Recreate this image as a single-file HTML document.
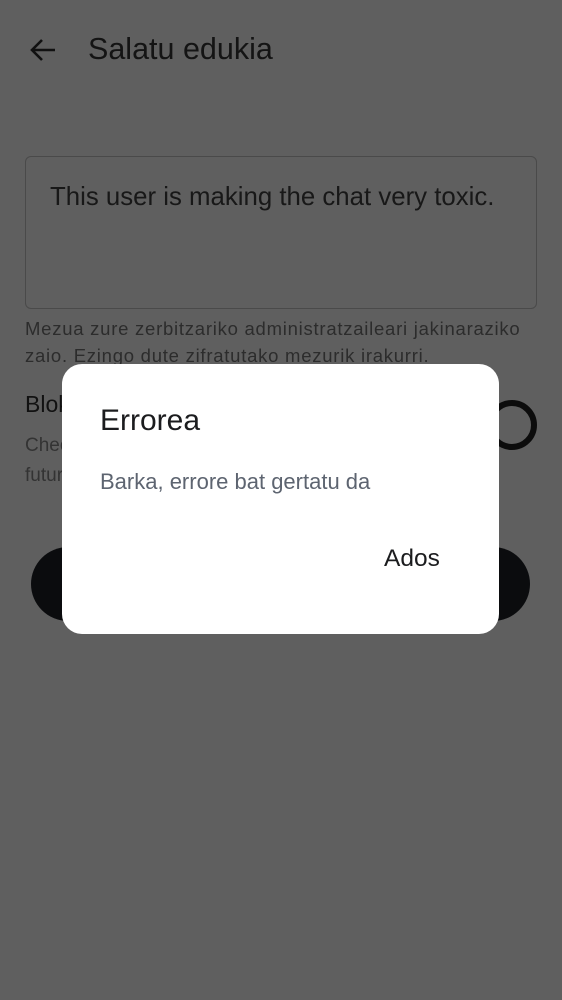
<!DOCTYPE html>
<html><head><meta charset="utf-8"><style>
html,body{margin:0;padding:0;width:562px;height:1000px;overflow:hidden;background:#5f5f5f;font-family:"Liberation Sans",sans-serif;}
.abs{position:absolute;white-space:nowrap}
</style></head><body>
<svg class="abs" style="left:28px;top:36px" width="30" height="28" viewBox="0 0 30 28"><path d="M27 14H4M14 4L4 14L14 24" stroke="#111" stroke-width="2.6" fill="none"/></svg>
<div class="abs" style="left:88px;top:32px;font-size:30.5px;color:#141414;">Salatu edukia</div>
<div class="abs" style="left:25px;top:156px;width:510px;height:151px;border:1.5px solid #4a4a4a;border-radius:6px;"></div>
<div class="abs" style="left:50px;top:183px;font-size:25.8px;color:#181818;">This user is making the chat very toxic.</div>
<div class="abs" style="left:25px;top:315px;font-size:18.5px;line-height:27px;color:#2c2c2c;letter-spacing:0.75px">Mezua zure zerbitzariko administratzaileari jakinaraziko<br>zaio. Ezingo dute zifratutako mezurik irakurri.</div>
<div class="abs" style="left:25px;top:391px;font-size:23px;color:#111;">Blokeatu erabiltzailea</div>
<div class="abs" style="left:25px;top:431px;font-size:19px;line-height:30px;color:#333;">Check to block<br>future</div>
<div class="abs" style="left:487px;top:400px;width:38px;height:38px;border:6px solid #0c0c0c;border-radius:50%;"></div>
<div class="abs" style="left:31px;top:547px;width:499px;height:74px;background:#0b0c0e;border-radius:37px;"></div>
<div class="abs" style="left:62px;top:364px;width:437px;height:270px;background:#fff;border-radius:20px;"></div>
<div class="abs" style="left:100px;top:404px;font-size:30px;color:#1b1c1e;">Errorea</div>
<div class="abs" style="left:100px;top:469px;font-size:22px;color:#5d6470;">Barka, errore bat gertatu da</div>
<div class="abs" style="left:384px;top:545px;font-size:24.5px;color:#1b1c1e;">Ados</div>
</body></html>
